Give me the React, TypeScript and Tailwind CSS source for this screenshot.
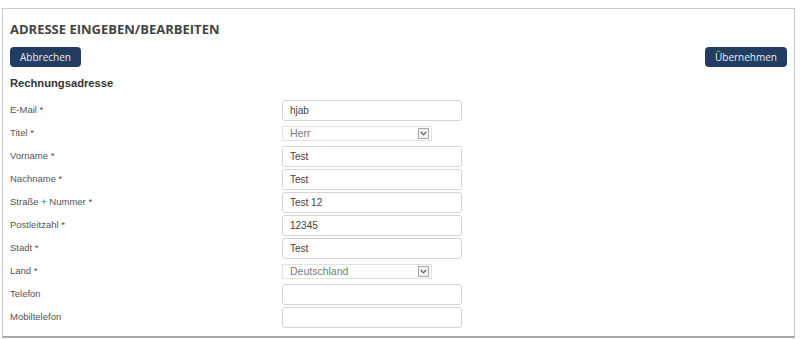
import React from 'react';

type Field = {
    label: string;
    value: string;
    kind: 'input' | 'select';
};

const fields: Field[] = [
    { label: 'E-Mail *', value: 'hjab', kind: 'input' },
    { label: 'Titel *', value: 'Herr', kind: 'select' },
    { label: 'Vorname *', value: 'Test', kind: 'input' },
    { label: 'Nachname *', value: 'Test', kind: 'input' },
    { label: 'Straße + Nummer *', value: 'Test 12', kind: 'input' },
    { label: 'Postleitzahl *', value: '12345', kind: 'input' },
    { label: 'Stadt *', value: 'Test', kind: 'input' },
    { label: 'Land *', value: 'Deutschland', kind: 'select' },
    { label: 'Telefon', value: '', kind: 'input' },
    { label: 'Mobiltelefon', value: '', kind: 'input' },
];

const FakeSelect: React.FC<{ value: string }> = ({ value }) => (
    <div className="w-[150px] h-[15px] border border-[#e2e2e2] bg-white flex items-center justify-between pl-[7px] pr-[2px]">
        <span className="text-[10.5px] leading-none text-[#7a7a7a]">{value}</span>
        <span className="w-[11px] h-[11px] border border-[#a9a9a9] bg-[#f2f2f2] flex items-center justify-center">
            <svg width="7" height="5" viewBox="0 0 7 5" fill="none">
                <path d="M0.8 1 L3.5 3.8 L6.2 1" stroke="#555" strokeWidth="1.1" />
            </svg>
        </span>
    </div>
);

export default function App() {
    return (
        <div className="w-[800px] h-[339px] bg-white overflow-hidden" style={{ fontFamily: '"Liberation Sans", Arial, sans-serif' }}>
            <div className="ml-[2px] mt-[8px] w-[793px] h-[330px] border border-[#c9c9c9] border-b-2 border-b-[#a8a8a8] pl-[7px] pr-[7px]">
                {/* Header */}
                <h1 className="mt-[11px] text-[13px] leading-[18px] font-bold text-[#444] uppercase" style={{ fontFamily: '"Open Sans", sans-serif' }}>
                    Adresse eingeben/bearbeiten
                </h1>

                <div className="mt-[9px] flex justify-between">
                    <button className="h-[20px] w-[71px] rounded-[4px] bg-[#233d62] text-[10px] text-[#e6ebf2]" style={{ fontFamily: '"Open Sans", sans-serif' }}>
                        Abbrechen
                    </button>
                    <button className="h-[20px] w-[82px] rounded-[4px] bg-[#233d62] text-[10px] text-[#e6ebf2]" style={{ fontFamily: '"Open Sans", sans-serif' }}>
                        Übernehmen
                    </button>
                </div>

                <h2 className="mt-[8px] text-[11.2px] leading-[16px] font-bold text-[#333]">Rechnungsadresse</h2>

                {/* Form rows */}
                <div className="mt-[8px] flex flex-col">
                    {fields.map(f => (
                        <div key={f.label} className="h-[23px] flex items-center">
                            <label className="w-[272px] text-[9.5px] text-[#555]">{f.label}</label>
                            {f.kind === 'input' ? (
                                <input
                                    readOnly
                                    value={f.value}
                                    className="w-[180px] h-[21px] rounded-[3px] border border-[#d6d6d6] bg-white px-[7px] text-[10px] text-[#444] outline-none"
                                    style={{ fontFamily: '"Liberation Sans", Arial, sans-serif' }}
                                />
                            ) : (
                                <FakeSelect value={f.value} />
                            )}
                        </div>
                    ))}
                </div>
            </div>
        </div>
    );
}
